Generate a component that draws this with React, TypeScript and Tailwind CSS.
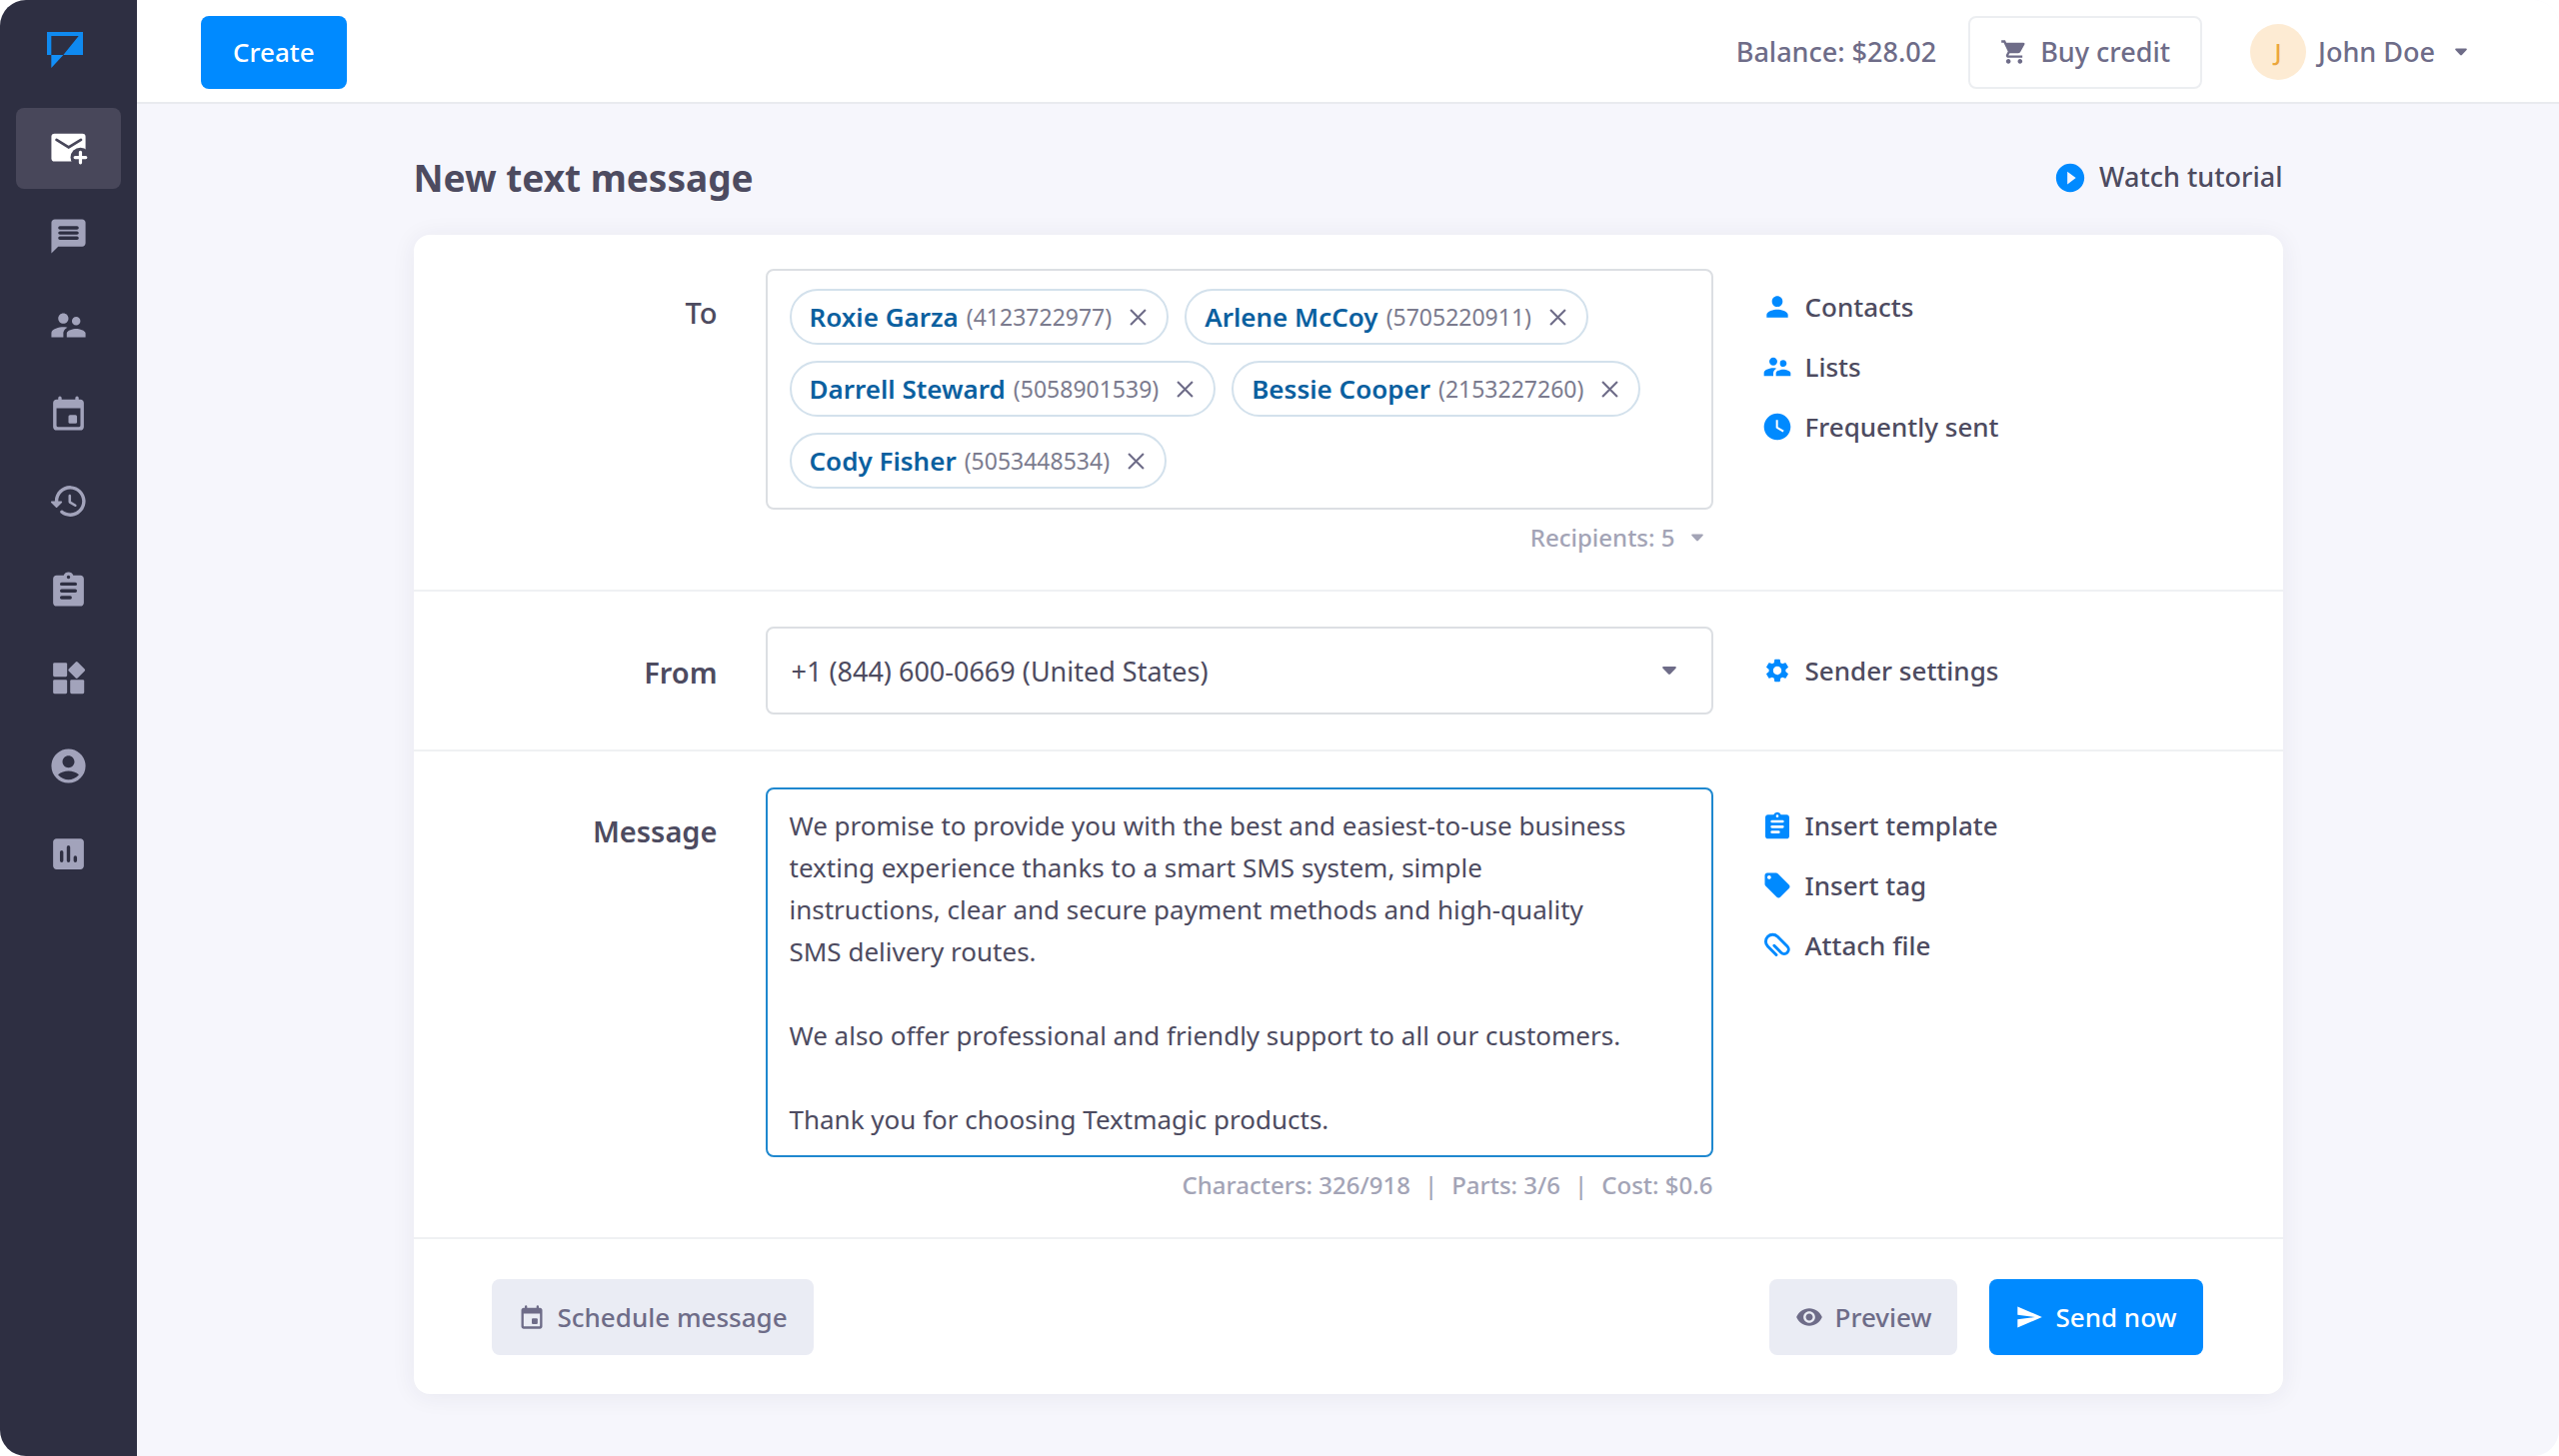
import { useState } from 'react';
import type { ReactNode } from 'react';
import {
  MdAccountCircle,
  MdLocalOffer,
  MdPerson,
  MdPlayCircleFilled,
  MdSend,
  MdSettings,
  MdShoppingCart,
  MdSupervisorAccount,
  MdVisibility,
  MdWatchLater,
} from 'react-icons/md';

interface IconProps {
  className?: string;
}

interface Recipient {
  name: string;
  phone: string;
}

const initialRecipients: Recipient[] = [
  { name: 'Roxie Garza', phone: '4123722977' },
  { name: 'Arlene McCoy', phone: '5705220911' },
  { name: 'Darrell Steward', phone: '5058901539' },
  { name: 'Bessie Cooper', phone: '2153227260' },
  { name: 'Cody Fisher', phone: '5053448534' },
];

const initialMessage = `We promise to provide you with the best and easiest-to-use business
texting experience thanks to a smart SMS system, simple
instructions, clear and secure payment methods and high-quality
SMS delivery routes.

We also offer professional and friendly support to all our customers.

Thank you for choosing Textmagic products.`;

function Logo({ className }: IconProps) {
  return (
    <svg viewBox="0 0 108 108" className={className} aria-hidden="true">
      <path d="M0 0H108V69H49L95 12H13V69H0Z" fill="#0f8af0" />
      <path d="M13 69H49L13 108Z" fill="#1390f8" />
    </svg>
  );
}

function ComposeIcon({ className }: IconProps) {
  return (
    <svg viewBox="0 0 24 24" fill="currentColor" className={className} aria-hidden="true">
      <mask id="compose-cut">
        <rect width="24" height="24" fill="#fff" />
        <path d="M5 7l7.1 4.4L19.3 7" fill="none" stroke="#000" strokeWidth="1.6" strokeLinecap="round" />
        <circle cx="19" cy="17.3" r="5.8" fill="#000" />
      </mask>
      <rect x="2" y="3.3" width="20" height="16.3" rx="1.8" mask="url(#compose-cut)" />
      <path d="M19 14.2v6.2M15.9 17.3h6.2" stroke="currentColor" strokeWidth="1.9" strokeLinecap="round" />
    </svg>
  );
}

function ChatIcon({ className }: IconProps) {
  return (
    <svg viewBox="0 0 24 24" fill="currentColor" className={className} aria-hidden="true">
      <path d="M20 2H4c-1.1 0-1.99.9-1.99 2L2 22l4-4h14c1.1 0 2-.9 2-2V4c0-1.1-.9-2-2-2zm-3 12H7c-.55 0-1-.45-1-1s.45-1 1-1h10c.55 0 1 .45 1 1s-.45 1-1 1zm0-3H7c-.55 0-1-.45-1-1s.45-1 1-1h10c.55 0 1 .45 1 1s-.45 1-1 1zm0-3H7c-.55 0-1-.45-1-1s.45-1 1-1h10c.55 0 1 .45 1 1s-.45 1-1 1z" />
    </svg>
  );
}

function CalendarIcon({ className }: IconProps) {
  return (
    <svg viewBox="0 0 24 24" fill="currentColor" className={className} aria-hidden="true">
      <path
        fillRule="evenodd"
        d="M8 3a1 1 0 0 0-2 0v1H5c-1.1 0-2 .9-2 2v14c0 1.1.9 2 2 2h14c1.1 0 2-.9 2-2V6c0-1.1-.9-2-2-2h-1V3a1 1 0 0 0-2 0v1H8zM5 9h14v10.2c0 .45-.35.8-.8.8H5.8c-.45 0-.8-.35-.8-.8z"
      />
      <rect x="12" y="13" width="5" height="5" rx=".9" />
    </svg>
  );
}

function HistoryIcon({ className }: IconProps) {
  return (
    <svg viewBox="0 0 24 24" fill="currentColor" className={className} aria-hidden="true">
      <path d="M13.26 3C8.17 2.86 4 6.95 4 12H2.21c-.45 0-.67.54-.35.85l2.79 2.8c.2.2.51.2.71 0l2.79-2.8c.31-.31.09-.85-.36-.85H6c0-3.9 3.18-7.05 7.1-7 3.72.05 6.85 3.18 6.9 6.9.05 3.91-3.1 7.1-7 7.1-1.61 0-3.1-.55-4.28-1.48-.4-.31-.96-.28-1.32.08-.42.42-.39 1.13.08 1.49C9 20.29 10.91 21 13 21c5.05 0 9.14-4.17 9-9.26-.13-4.69-4.05-8.61-8.74-8.74zm-.51 5c-.41 0-.75.34-.75.75v3.68c0 .35.19.68.49.86l3.12 1.85c.36.21.82.09 1.03-.26.21-.36.09-.82-.26-1.03l-2.88-1.71v-3.4c0-.4-.34-.74-.75-.74z" />
    </svg>
  );
}

function TemplateIcon({ className }: IconProps) {
  return (
    <svg viewBox="0 0 24 24" fill="currentColor" className={className} aria-hidden="true">
      <path
        fillRule="evenodd"
        d="M19 4h-4.2a3 3 0 0 0-5.6 0H5c-1.1 0-2 .9-2 2v14c0 1.1.9 2 2 2h14c1.1 0 2-.9 2-2V6c0-1.1-.9-2-2-2zM12 4a1 1 0 0 1 0 2a1 1 0 0 1 0-2zM8 8h8a1 1 0 0 1 0 2H8a1 1 0 0 1 0-2zM8 12h8a1 1 0 0 1 0 2H8a1 1 0 0 1 0-2zM8 16h5a1 1 0 0 1 0 2H8a1 1 0 0 1 0-2z"
      />
    </svg>
  );
}

function WidgetsIcon({ className }: IconProps) {
  return (
    <svg viewBox="0 0 24 24" fill="currentColor" className={className} aria-hidden="true">
      <rect x="3" y="3" width="8.2" height="8.2" rx=".8" />
      <rect x="3" y="13" width="8.2" height="8.2" rx=".8" />
      <rect x="13" y="13" width="8.2" height="8.2" rx=".8" />
      <rect x="13.1" y="3.6" width="7.4" height="7.4" rx=".8" transform="rotate(45 16.8 7.3)" />
    </svg>
  );
}

function ReportsIcon({ className }: IconProps) {
  return (
    <svg viewBox="0 0 24 24" fill="currentColor" className={className} aria-hidden="true">
      <path
        fillRule="evenodd"
        d="M19 3H5c-1.1 0-2 .9-2 2v14c0 1.1.9 2 2 2h14c1.1 0 2-.9 2-2V5c0-1.1-.9-2-2-2zM7 11a1 1 0 0 1 2 0v5a1 1 0 0 1-2 0zM11 8a1 1 0 0 1 2 0v8a1 1 0 0 1-2 0zM15 14a1 1 0 0 1 2 0v2a1 1 0 0 1-2 0z"
      />
    </svg>
  );
}

function ClipIcon({ className }: IconProps) {
  return (
    <svg
      viewBox="0 0 24 24"
      fill="none"
      stroke="currentColor"
      strokeWidth="2.2"
      strokeLinecap="round"
      className={className}
      aria-hidden="true"
    >
      <path d="M16.5 17.6H7.5a5.2 5.2 0 0 1 0-10.400H17.800a3.300 3.300 0 0 1 0 6.600H10.500" transform="rotate(45 12 12)" />
    </svg>
  );
}

function CaretIcon({ className }: IconProps) {
  return (
    <svg viewBox="0 0 14 8" fill="currentColor" className={className} aria-hidden="true">
      <path d="M1.2 0h11.6c.9 0 1.3 1 .7 1.7L8 7.5c-.6.6-1.4.6-2 0L.5 1.7C-.1 1 .3 0 1.2 0z" />
    </svg>
  );
}

function CloseIcon({ className }: IconProps) {
  return (
    <svg viewBox="0 0 16 16" fill="none" stroke="currentColor" strokeWidth="2" className={className} aria-hidden="true">
      <path d="M1 1l14 14M15 1L1 15" />
    </svg>
  );
}

const navItems = [
  { label: 'New message', icon: ComposeIcon },
  { label: 'Chats', icon: ChatIcon },
  { label: 'Contacts', icon: MdSupervisorAccount },
  { label: 'Scheduled', icon: CalendarIcon },
  { label: 'History', icon: HistoryIcon },
  { label: 'Templates', icon: TemplateIcon },
  { label: 'Services', icon: WidgetsIcon },
  { label: 'Account', icon: MdAccountCircle },
  { label: 'Reports', icon: ReportsIcon },
];

function Sidebar() {
  return (
    <aside className="flex w-[137px] shrink-0 flex-col bg-[#2e2f42] px-4">
      <a href="#home" aria-label="Home" className="ml-[31px] mt-8 block size-9">
        <Logo className="size-9" />
      </a>
      <nav className="mt-10 flex h-[787px] flex-col justify-between">
        {navItems.map(({ label, icon: Icon }, i) => (
          <a
            key={label}
            href="#nav"
            aria-label={label}
            className={
              i === 0
                ? 'flex h-[81px] items-center justify-center rounded-lg bg-[#48475a] text-white'
                : 'flex h-[81px] items-center justify-center rounded-lg text-[#a2a3bb]'
            }
          >
            <Icon className="size-[41px]" />
          </a>
        ))}
      </nav>
    </aside>
  );
}

function Header() {
  return (
    <header className="flex h-[104px] items-center border-b-2 border-[#e9ebef] bg-white pl-16 pr-[92px] pt-0.5 text-[27px] font-medium text-[#6e6c88]">
      <button type="button" className="h-[73px] rounded-lg bg-[#008aff] px-8 text-[26px] text-white">
        Create
      </button>
      <span className="ml-auto">Balance: $28.02</span>
      <button type="button" className="ml-8 flex h-[73px] items-center gap-3 rounded-lg border-2 border-[#eceef1] px-[30px]">
        <MdShoppingCart className="size-7" />
        Buy credit
      </button>
      <button type="button" className="ml-12 flex items-center gap-3">
        <span className="flex size-14 items-center justify-center rounded-full bg-[#fdebd3] text-2xl text-[#eba63c]">
          J
        </span>
        John Doe
        <CaretIcon className="ml-2 h-2 w-3" />
      </button>
    </header>
  );
}

function SideLink({ icon, children }: { icon: ReactNode; children: ReactNode }) {
  return (
    <a href="#action" className="flex h-9 items-center gap-3 text-[26px] font-medium text-[#4d4b60]">
      <span className="flex w-8 justify-center text-[#008aff]">{icon}</span>
      {children}
    </a>
  );
}

function Row({ children }: { children: ReactNode }) {
  return <div className="grid grid-cols-[304px_minmax(0,948px)_1fr] gap-x-12">{children}</div>;
}

export default function App() {
  const [recipients, setRecipients] = useState(initialRecipients);

  return (
    <div className="flex min-h-screen overflow-hidden rounded-[26px] bg-[#f6f6fc] font-['Noto_Sans',sans-serif] text-[#4d4b60]">
      <Sidebar />
      <div className="min-w-0 flex-1">
        <Header />
        <main className="mx-auto max-w-[1870px] pb-[60px]">
          <div className="flex h-[131px] items-center justify-between pt-4">
            <h1 className="text-[37px] font-bold">New text message</h1>
            <a href="#tutorial" className="flex items-center gap-3 text-[27px] font-medium">
              <MdPlayCircleFilled className="size-[34px] text-[#008aff]" />
              Watch tutorial
            </a>
          </div>

          <form
            className="rounded-2xl bg-white shadow-[0_2px_24px_rgba(46,47,66,0.07)]"
            onSubmit={(e) => e.preventDefault()}
          >
            <section className="pb-8 pt-[34px]">
              <Row>
                <span className="pt-6 text-right text-[29px] font-medium leading-10">To</span>
                <div>
                  <ul className="flex flex-wrap gap-4 rounded-lg border-2 border-[#dcdfe3] px-[22px] pb-[19px] pt-[18px]">
                    {recipients.map((r) => (
                      <li
                        key={r.phone}
                        className="flex h-14 items-center rounded-full border-2 border-[#d3e1ec] pl-[18px] pr-5"
                      >
                        <span className="text-[26px] font-semibold text-[#0b609f]">{r.name}</span>
                        <span className="ml-2 text-[23px] text-[#7b7b8e]">({r.phone})</span>
                        <button
                          type="button"
                          aria-label={`Remove ${r.name}`}
                          className="ml-[18px] text-[#6e6c88]"
                          onClick={() => setRecipients(recipients.filter((x) => x !== r))}
                        >
                          <CloseIcon className="size-[17px]" />
                        </button>
                      </li>
                    ))}
                  </ul>
                  <button
                    type="button"
                    className="ml-auto mr-2.5 mt-2 flex h-10 items-center gap-4 text-2xl font-medium text-[#a3a4b6]"
                  >
                    Recipients: {recipients.length}
                    <CaretIcon className="h-2 w-3" />
                  </button>
                </div>
                <div className="flex flex-col gap-6 pt-5">
                  <SideLink icon={<MdPerson className="size-8" />}>Contacts</SideLink>
                  <SideLink icon={<MdSupervisorAccount className="size-8" />}>Lists</SideLink>
                  <SideLink icon={<MdWatchLater className="size-8" />}>Frequently sent</SideLink>
                </div>
              </Row>
            </section>

            <section className="border-t-2 border-[#eff1f3] py-[35px]">
              <Row>
                <label htmlFor="from" className="self-center pt-1 text-right text-[29px] font-semibold">
                  From
                </label>
                <div className="relative">
                  <select
                    id="from"
                    className="h-[88px] w-full appearance-none rounded-lg border-2 border-[#dcdfe3] bg-white px-6 pt-0.5 text-[27px]"
                  >
                    <option>+1 (844) 600-0669 (United States)</option>
                  </select>
                  <CaretIcon className="pointer-events-none absolute right-9 top-10 h-2 w-4 text-[#6e6c88]" />
                </div>
                <div className="self-center">
                  <SideLink icon={<MdSettings className="size-7" />}>Sender settings</SideLink>
                </div>
              </Row>
            </section>

            <section className="border-t-2 border-[#eff1f3] pb-8 pt-9">
              <Row>
                <label htmlFor="message" className="pt-6 text-right text-[29px] font-semibold leading-10">
                  Message
                </label>
                <div>
                  <textarea
                    id="message"
                    rows={8}
                    defaultValue={initialMessage}
                    className="block w-full resize-none rounded-lg border-2 border-[#1f88cf] bg-white px-[22px] py-[15px] text-[26px] leading-[42px] outline-none"
                  />
                  <p className="mt-2 flex h-10 items-center justify-end gap-3.5 text-2xl font-medium text-[#a3a4b6]">
                    <span>Characters: 326/918</span>
                    <span>|</span>
                    <span>Parts: 3/6</span>
                    <span>|</span>
                    <span>Cost: $0.6</span>
                  </p>
                </div>
                <div className="flex flex-col gap-6 pt-5">
                  <SideLink icon={<TemplateIcon className="size-8" />}>Insert template</SideLink>
                  <SideLink icon={<MdLocalOffer className="size-[30px]" />}>Insert tag</SideLink>
                  <SideLink icon={<ClipIcon className="size-8" />}>Attach file</SideLink>
                </div>
              </Row>
            </section>

            <footer className="flex items-center gap-8 border-t-2 border-[#eff1f3] pb-[39px] pl-[78px] pr-20 pt-10 text-[26px] font-medium">
              <button
                type="button"
                className="mr-auto flex h-[76px] items-center gap-3 rounded-lg bg-[#eaecf4] px-[26px] text-[#6e6c88]"
              >
                <CalendarIcon className="size-7" />
                Schedule message
              </button>
              <button
                type="button"
                className="flex h-[76px] items-center gap-3 rounded-lg bg-[#eaecf4] px-[26px] text-[#6e6c88]"
              >
                <MdVisibility className="size-7" />
                Preview
              </button>
              <button
                type="submit"
                className="flex h-[76px] items-center gap-3 rounded-lg bg-[#008aff] px-[26px] text-white"
              >
                <MdSend className="size-7" />
                Send now
              </button>
            </footer>
          </form>
        </main>
      </div>
    </div>
  );
}
